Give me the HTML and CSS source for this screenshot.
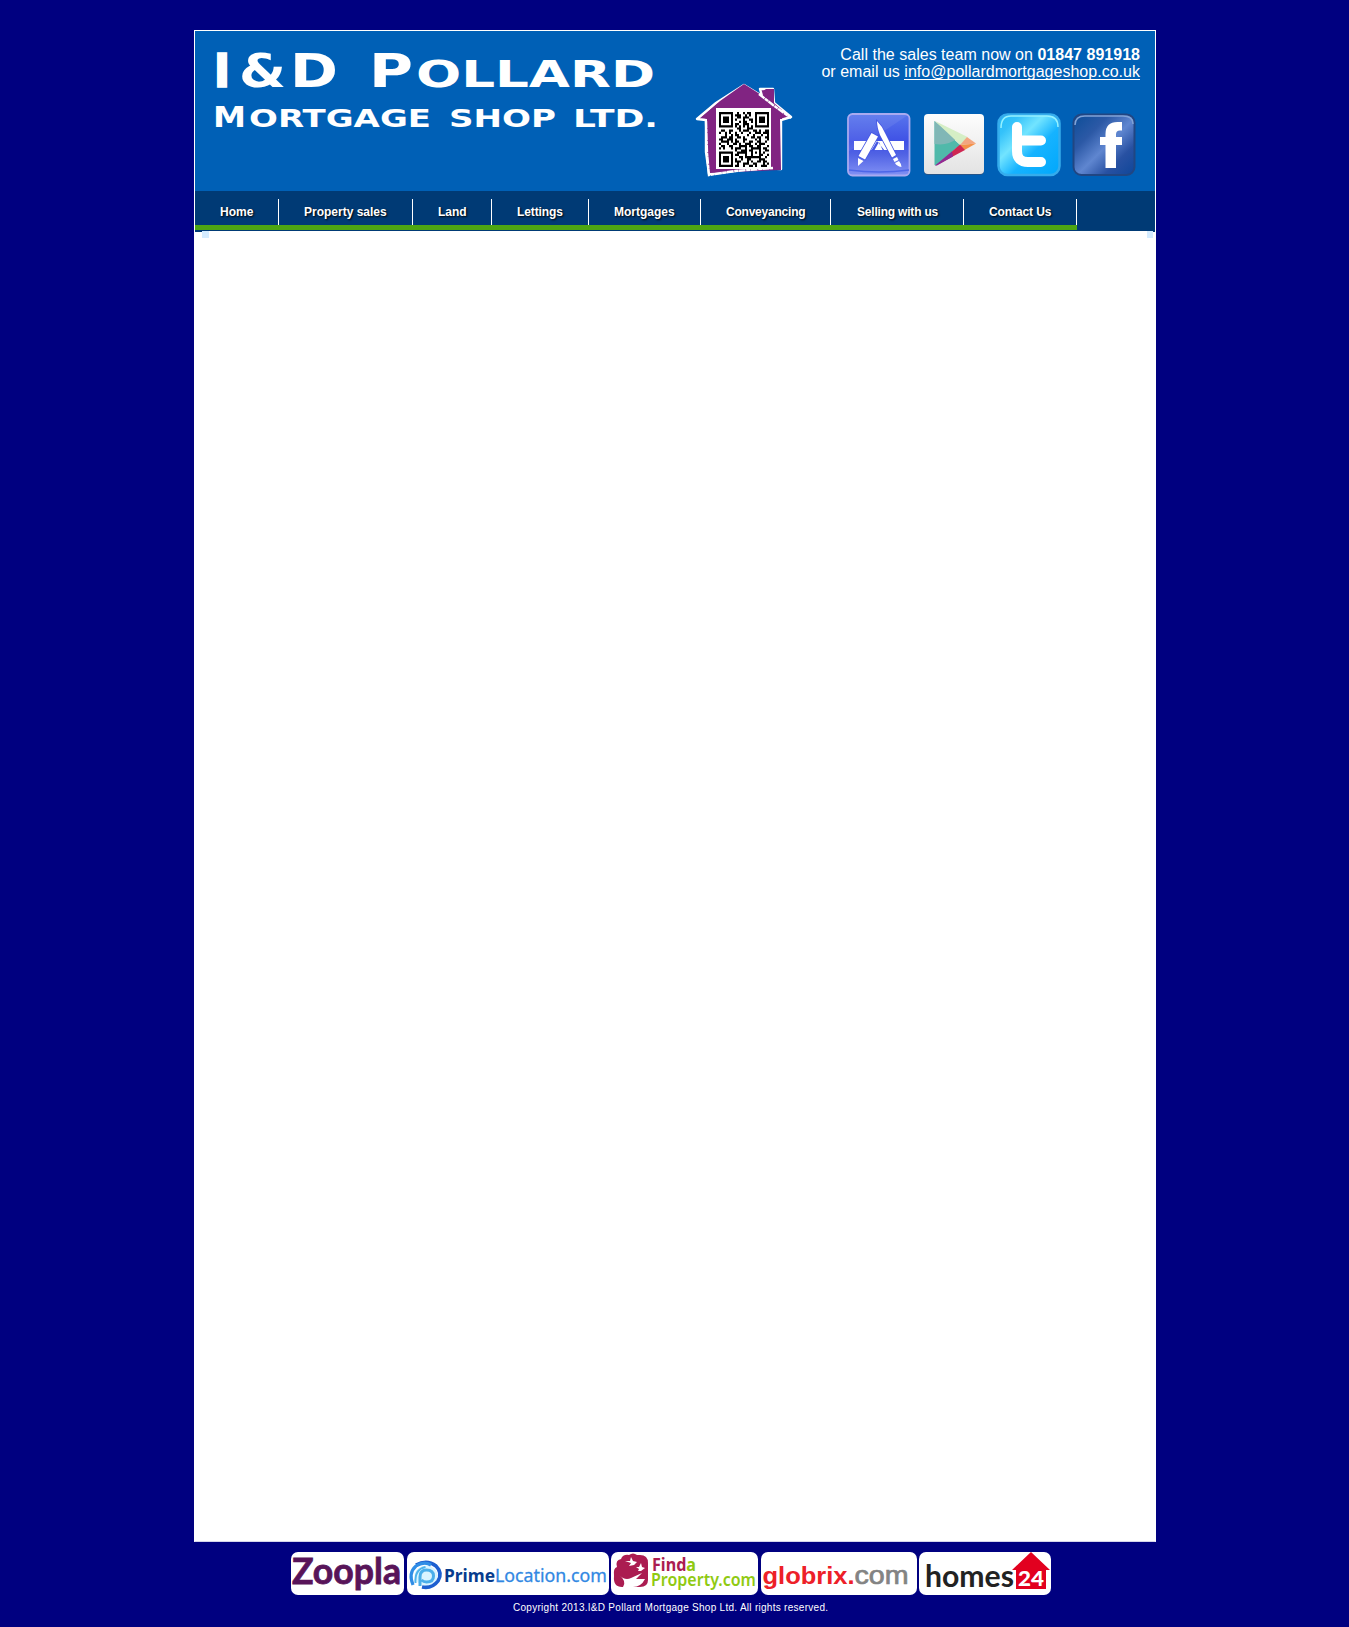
FILE: index.html
```html
<!DOCTYPE html>
<html lang="en">
<head>
<meta charset="utf-8">
<title>I&amp;D Pollard Mortgage Shop Ltd.</title>
<link rel="stylesheet" href="styles.css">
</head>
<body>
<div class="page">
  <header class="header">
    <svg class="logo" viewBox="195 31 480 160" width="480" height="160" role="img" aria-label="I&amp;D Pollard Mortgage Shop Ltd.">
      <g class="logo-text">
        <g font-size="46">
          <text x="213.500" y="87" textLength="17" lengthAdjust="spacingAndGlyphs" stroke="#fff" stroke-width="1.500">I</text>
          <text x="239" y="87" textLength="47" lengthAdjust="spacingAndGlyphs">&amp;</text>
          <text x="290" y="87" textLength="48" lengthAdjust="spacingAndGlyphs">D</text>
          <text x="369" y="87" textLength="44" lengthAdjust="spacingAndGlyphs">P</text>
        </g>
        <text x="416" y="87" font-size="37.5" textLength="239" lengthAdjust="spacingAndGlyphs">OLLARD</text>
        <text x="213" y="127" font-size="29" textLength="33" lengthAdjust="spacingAndGlyphs">M</text>
        <g font-size="24.5">
          <text x="249" y="127" textLength="182" lengthAdjust="spacingAndGlyphs">ORTGAGE</text>
          <text x="449" y="127" textLength="107" lengthAdjust="spacingAndGlyphs">SHOP</text>
          <text x="573" y="127" textLength="85" lengthAdjust="spacingAndGlyphs">LTD.</text>
        </g>
      </g>
    </svg>
    <svg class="house" viewBox="690 80 108 100" width="108" height="100" aria-hidden="true">
      <path d="M744 85L762 96 760 89 773 89 774 103 791 117 781 120 781 169 760 168 709 174 706 152 706 120 697 119 716 103Z" fill="#812482" stroke="#fff" stroke-width="2.400" stroke-linejoin="round"/>
      <path d="M744 84L763 96 763 91 766 89 774 89 774 103 782 110 782 119 780 119 781 170 709 173 707 152 707 119 702 117 720 101Z" fill="#812482"/>
      <path d="M759 94l14 11 18 13M706 121l1 32 2 22 26-4 38-3" fill="none" stroke="#fff" stroke-width="2.400" stroke-dasharray="7 .6 4 .4"/>
      <path d="M716 108h55v61h-55z" fill="#fff"/>
      <g transform="translate(719 112) scale(2 2.2)">
        <path d="M.5.5h6v6h-6zM18.500.5h6v6h-6zM.5 18.500h6v6h-6z" fill="none" stroke="#000"/>
        <path d="M2 2h3v3h-3zM20 2h3v3h-3zM2 20h3v3h-3z"/>
        <path fill="none" stroke="#000" d="M9 .5h1m2 0h1m1 0h2M8 1.500h3m2 0h1m1 0h1M9 2.500h2m1 0h3M8 3.500h1m3 0h1m2 0h2M10 4.500h1m1 0h2m2 0h1M8 5.500h2m2 0h3M8 6.500h1m1 0h1m1 0h1m1 0h1m1 0h1M9 7.500h2m3 0h3M1 8.500h2m2 0h2m3 0h1m1 0h3m2 0h2m1 0h1m2 0h2M0 9.500h1m2 0h1m1 0h1m2 0h1m2 0h1m3 0h1m2 0h3m1 0h3M3 10.500h1m2 0h1m1 0h2m4 0h1m2 0h1m3 0h1m2 0h1M1 11.500h3m1 0h2m2 0h2m1 0h1m3 0h2m1 0h2m2 0h2M0 12.500h2m2 0h3m1 0h1m3 0h2m4 0h1m1 0h1m3 0h1M1 13.500h4m1 0h1m1 0h2m2 0h1m2 0h2m2 0h2m2 0h1M0 14.500h1m3 0h1m2 0h2m1 0h1m2 0h3m2 0h1m1 0h3M1 15.500h2m2 0h2m3 0h4m1 0h2m2 0h2m3 0h1M0 16.500h1m1 0h1m3 0h1m1 0h3m2 0h1m2 0h5m1 0h2M8 17.500h1m2 0h3m1 0h2m3 0h1m2 0h2M9 18.500h5m2 0h1m1 0h1m1 0h1m1 0h1M8 19.500h2m3 0h1m2 0h1m3 0h2m2 0h1M10 20.500h2m1 0h8m2 0h1M8 21.500h1m2 0h1m2 0h2m4 0h3M8 22.500h3m3 0h1m1 0h1m2 0h2m1 0h2M9 23.500h1m2 0h3m2 0h2m3 0h1m1 0h1M8 24.500h2m2 0h1m2 0h2m1 0h1m2 0h3"/>
      </g>
    </svg>
    <div class="contact">
      <p class="contact-text">Call the sales team now on <strong>01847 891918</strong><br>or email us <a class="mail" href="mailto:info@pollardmortgageshop.co.uk">info@pollardmortgageshop.co.uk</a></p>
      <div class="apps">
        <svg viewBox="0 0 64 64" width="64" height="64" aria-label="App Store">
          <defs>
            <linearGradient id="as" x1="0" y1="0" x2="0" y2="1"><stop offset="0" stop-color="#5875ed"/><stop offset=".45" stop-color="#3f51e5"/><stop offset=".65" stop-color="#5062e4"/><stop offset="1" stop-color="#8191f4"/></linearGradient>
          </defs>
          <rect x="1" y="1" width="61.500" height="61.500" rx="4.500" fill="url(#as)" stroke="#a9aaf0" stroke-width="1.800"/>
          <path d="M2 2h59L40 16 2 38z" fill="#fff" opacity=".08"/>
          <path d="M2 57q30 4 60 0" stroke="#4d66e8" stroke-width="1.500" fill="none"/>
          <path d="M7 28h50v9H7z" fill="#fff"/>
          <path d="M30 28L24 38h3l5-9 4 9h2z" fill="#4557e4"/>
          <g fill="#fff" stroke="#4557e4" stroke-width="1.600" paint-order="stroke">
            <path d="M24.500 20l6.500 3.500L18 46.500 11.500 43z"/>
            <path d="M30 8q5 5 8 12l11 22-4 2.500L33 22Q30 14 30 8z"/>
          </g>
          <path d="M11 45l5.500 3-5.500 5zM46 46l4-2 1.500 3-4 2zM48 50l4-2q2.500 3 2.500 6-5-1-6.500-4z" fill="#fff"/>
        </svg>
        <svg viewBox="0 0 64 64" width="64" height="64" aria-label="Google Play">
          <defs><linearGradient id="gp" x1="0" y1="0" x2="0" y2="1"><stop offset="0" stop-color="#fdfdfd"/><stop offset="1" stop-color="#e3e3e3"/></linearGradient></defs>
          <rect x="2" y="2" width="60" height="60" rx="4" fill="#245489"/>
          <rect x="2" y="1" width="60" height="60" rx="4" fill="url(#gp)"/>
          <path d="M12.500 8v44l1.500.5L38 32z" fill="#50b9aa"/>
          <path d="M12.500 8v23q13 2 22-5z" fill="#80b7b6"/>
          <path d="M13 8l32.500 16-7 8z" fill="#d5eec5"/>
          <path d="M45 24l9 6.500-16 1.500z" fill="#f3a680"/>
          <path d="M38 32l16-1.500L42.500 37z" fill="#f49148"/>
          <path d="M38 31.500l5 5.500L14 52.500z" fill="#cf2752"/>
          <path d="M13 52.500l17-14 1 5-16 9z" fill="#912b93"/>
        </svg>
        <svg viewBox="0 0 64 64" width="64" height="64" aria-label="Twitter">
          <defs><linearGradient id="tw" x1="0" y1="0" x2="1" y2="1"><stop offset="0" stop-color="#21bcf7"/><stop offset=".18" stop-color="#35c2fa"/><stop offset=".38" stop-color="#72e4ff"/><stop offset=".6" stop-color="#16b3ff"/><stop offset="1" stop-color="#00a7fb"/></linearGradient></defs>
          <rect x="1.500" y="1.500" width="61" height="60.500" rx="9" fill="url(#tw)" stroke="#35acec" stroke-width="2.500"/>
          <path d="M4 15q0-12 10-12h36q11 0 11 11" stroke="#95f1ff" stroke-width="1.500" fill="none"/>
          <path d="M20 14v24q0 11 11 11h13M20 27.500h24" fill="none" stroke="#fff" stroke-width="10" stroke-linecap="round"/>
        </svg>
        <svg viewBox="0 0 64 64" width="64" height="64" aria-label="Facebook">
          <defs><linearGradient id="fb" x1="0" y1="0" x2="1" y2="1"><stop offset="0" stop-color="#0b4d98"/><stop offset=".3" stop-color="#2c59a6"/><stop offset=".53" stop-color="#5f86d0"/><stop offset=".75" stop-color="#2851a2"/><stop offset="1" stop-color="#0e4699"/></linearGradient></defs>
          <rect x="1.500" y="1.500" width="61" height="60.500" rx="8" fill="url(#fb)" stroke="#214682" stroke-width="2"/>
          <path d="M3 12q0-9 10-9h38q10 0 10 8" stroke="#81a3d6" stroke-width="1.500" fill="none"/>
          <path d="M33.500 55V32h-5.500v-8h5.500v-3q0-12 12-12h4.500v8.500h-2q-4 0-4 4v2.500h6v8h-6v23z" fill="#fff"/>
        </svg>
      </div>
    </div>
  </header>
  <nav class="nav">
    <a href="#">Home</a><a href="#">Property sales</a><a href="#">Land</a><a href="#">Lettings</a><a href="#">Mortgages</a><a href="#">Conveyancing</a><a href="#">Selling with us</a><a href="#">Contact Us</a>
  </nav>
  <main class="content"><i class="corner"></i><i class="corner corner-right"></i></main>
</div>
<footer class="footer">
  <div class="partners">
    <svg width="113" height="43" viewBox="291 1552 113 43" aria-label="Zoopla">
      <rect x="291" y="1552" width="113" height="43" rx="7" fill="#fff"/>
      <text class="round" x="292" y="1584" font-size="36" fill="#581459" stroke="#581459" stroke-width=".8" textLength="109" lengthAdjust="spacingAndGlyphs">Zoopla</text>
    </svg>
    <svg width="202" height="43" viewBox="407 1552 202 43" aria-label="PrimeLocation.com">
      <rect x="407" y="1552" width="202" height="43" rx="7" fill="#fff"/>
      <ellipse cx="426" cy="1575.500" rx="11.500" ry="10" fill="#d9f4ff"/>
      <path d="M416 1565q11-6 20 1 7 7 2 15-6 8-16 6" fill="none" stroke="#1d5fd0" stroke-width="3.600"/>
      <path d="M413 1585q-5-12 3-19 8-5 15-1" fill="none" stroke="#2f8de6" stroke-width="3.200"/>
      <path d="M420 1586v-9q0-7 6.500-7 7 0 7 6t-7 6q-3 0-5-2" fill="none" stroke="#4aaeea" stroke-width="3"/>
      <path d="M415.500 1583q-1-14 10-16" fill="none" stroke="#4fb3ec" stroke-width="2"/>
      <text class="noto" x="444" y="1582" font-size="18" font-weight="700" fill="#073c8e" textLength="51" lengthAdjust="spacingAndGlyphs">Prime</text>
      <text class="noto" x="495" y="1582" font-size="18" fill="#3188e3" stroke="#3188e3" stroke-width=".3" textLength="112" lengthAdjust="spacingAndGlyphs">Location.com</text>
    </svg>
    <svg width="147" height="43" viewBox="611 1552 147 43" aria-label="FindaProperty.com">
      <rect x="611" y="1552" width="147" height="43" rx="7" fill="#fff"/>
      <path d="M614 1576q-1-8 3-9-2-7 4-8 2-5 8-4 4-3 8 0h3q8 0 8 8v17q0 7-8 7h-18q-9 0-8-11z" fill="#ab1c51"/>
      <path d="M619 1575q6 6 12 3l11-5-6 6h9q-4 8-12 8h-10q4-6-4-12z" fill="#fff"/>
      <path d="M625 1561l5 0 1-4 2 4 4 1-3 3-5 1 2-3zM636 1567l3 0 2-4 1 4 3 1-4 3-3 0 1-2z" fill="#fff"/>
      <text class="noto" x="652" y="1571" font-size="18.500" font-weight="700" fill="#ab1c51" textLength="44" lengthAdjust="spacingAndGlyphs">Find<tspan fill="#90ca12">a</tspan></text>
      <text class="noto" x="651" y="1586" font-size="18.500" font-weight="600" fill="#90ca12" textLength="105" lengthAdjust="spacingAndGlyphs">Property.com</text>
    </svg>
    <svg width="156" height="43" viewBox="760 1552 156 43" aria-label="globrix.com">
      <rect x="760" y="1552" width="156" height="43" rx="7" fill="#fff"/>
      <text class="arial" x="761.500" y="1584" font-size="24.500" font-weight="700" fill="#ed2028" textLength="92" lengthAdjust="spacingAndGlyphs">globrix.</text>
      <text class="arial" x="853.500" y="1584" font-size="25" fill="#838383" stroke="#838383" stroke-width=".7" textLength="54" lengthAdjust="spacingAndGlyphs">com</text>
    </svg>
    <svg width="132" height="43" viewBox="919 1552 132 43" aria-label="homes24">
      <rect x="919" y="1552" width="132" height="43" rx="7" fill="#fff"/>
      <path d="M1012 1570l19-18 19 18h-4v19h-30v-19z" fill="#e2001f"/>
      <text class="round" x="925" y="1587" font-size="30" fill="#222" textLength="89" lengthAdjust="spacingAndGlyphs">homes</text>
      <text class="round heavy" x="1018" y="1586" font-size="20" fill="#fff" textLength="26" lengthAdjust="spacingAndGlyphs">24</text>
    </svg>
  </div>
  <p class="copyright">Copyright 2013.I&amp;D Pollard Mortgage Shop Ltd. All rights reserved.</p>
</footer>
</body>
</html>
```
FILE: styles.css
```css
body {
  margin: 0;
  background: #000080;
  font-family: "Liberation Sans", Arial, sans-serif;
  color: #fff;
}

svg {
  display: block;
  overflow: visible;
}

.page {
  box-sizing: border-box;
  width: 962px;
  height: 1512px;
  margin: 30px 0 0 194px;
  border: 1px solid #fff;
  border-bottom-color: #d5d5ea;
  background: #fff;
  display: flex;
  flex-direction: column;
}

.header {
  display: flex;
  height: 160px;
  background: #0060b6;
}

.logo-text {
  font-family: "DejaVu Sans", sans-serif;
  font-weight: 700;
  fill: #fff;
}

.house { margin: 49px 0 0 15px; }

.contact {
  flex: 1;
  padding: 15px 15px 0 0;
}

.contact-text {
  margin: 0;
  font-size: 16px;
  line-height: 17px;
  letter-spacing: .02px;
  text-align: right;
  white-space: nowrap;
}

.mail {
  display: inline-block;
  height: 16px;
  border-bottom: 1px solid #fff;
  color: #fff;
  text-decoration: none;
}

.apps {
  display: flex;
  justify-content: flex-end;
  gap: 11px;
  margin: 33px 4px 0 0;
}

.nav {
  display: flex;
  height: 40px;
  box-sizing: border-box;
  padding: 8px 0 1px;
  background: #003a75;
}

.nav a {
  box-sizing: border-box;
  height: 31px;
  padding: 0 0 0 25px;
  border-bottom: 5px solid #4da513;
  background: linear-gradient(#fff, #fff) right / 1px 100% no-repeat;
  color: #fff;
  font-size: 12px;
  font-weight: 700;
  line-height: 26px;
  text-decoration: none;
  text-shadow: 1px 1px 2px #000;
  white-space: nowrap;
}

.nav a:nth-child(1) { width: 84px; }
.nav a:nth-child(2) { width: 134px; }
.nav a:nth-child(3) { width: 79px; }
.nav a:nth-child(4) { width: 97px; letter-spacing: -.1px; }
.nav a:nth-child(5) { width: 112px; }
.nav a:nth-child(6) { width: 130px; letter-spacing: -.22px; }
.nav a:nth-child(7) { width: 133px; padding-left: 26px; letter-spacing: -.2px; }
.nav a:nth-child(8) { width: 113px; letter-spacing: -.1px; }

.content {
  flex: 1;
  display: flex;
  justify-content: space-between;
  background:
    linear-gradient(#003a75, #003a75) 0 0 / 7px 1px no-repeat,
    linear-gradient(#003a75, #003a75) 100% 0 / 2px 1px no-repeat;
}

.corner {
  width: 7px;
  height: 7px;
  margin-left: 7px;
  background: #d5ecff;
}

.corner-right {
  width: 6px;
  margin: 0 2px 0 0;
}

.footer { padding-top: 10px; }

.partners {
  display: flex;
  gap: 2.5px;
  margin-left: 291px;
}

.copyright {
  margin: 6px 0 0 513px;
  font-size: 10px;
  line-height: 14px;
  letter-spacing: .28px;
  white-space: nowrap;
}

.round { font-family: Lato, sans-serif; font-weight: 700; }
.heavy { font-weight: 900; }
.noto { font-family: "Noto Sans", sans-serif; }
.arial { font-family: "Liberation Sans", Arial, sans-serif; }
```
